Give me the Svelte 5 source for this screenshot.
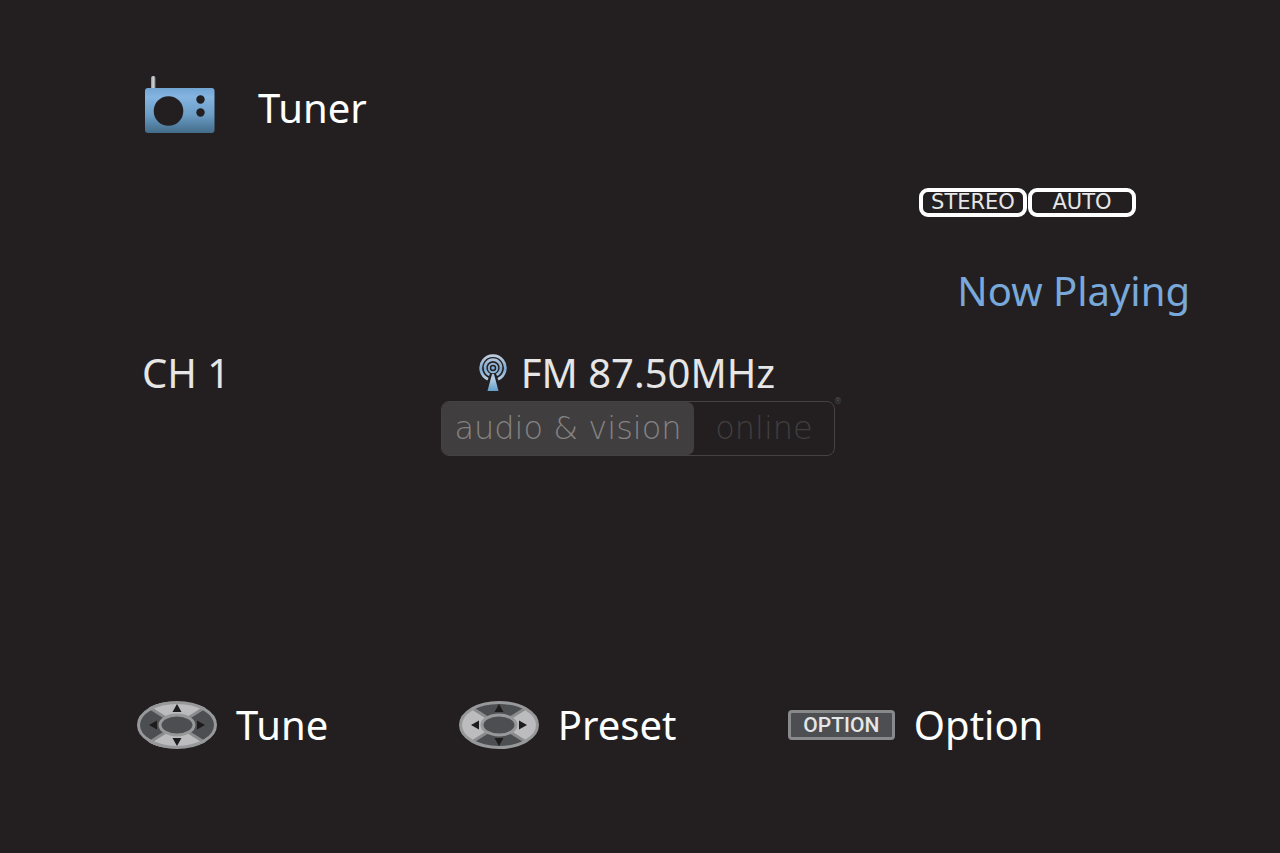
<script>
  let source = "Tuner";
  let status = "Now Playing";
  let modes = ["STEREO", "AUTO"];
  let station = { channel: "CH 1", frequency: "FM 87.50MHz" };

  // axis = the pair of arrows that is lit on the cursor pad
  let hints = [
    { label: "Tune", axis: "vertical" },
    { label: "Preset", axis: "horizontal" },
    { label: "Option", key: "OPTION" },
  ];
</script>

<main class="screen">
  <header class="title">
    <svg class="radio" viewBox="0 0 72 60" aria-hidden="true">
      <defs>
        <linearGradient id="radio-body" x1="0" y1="0" x2="0" y2="1">
          <stop offset="0" stop-color="#73a5d4" />
          <stop offset="0.2" stop-color="#84b4e0" />
          <stop offset="0.6" stop-color="#6b9dc6" />
          <stop offset="1" stop-color="#426b88" />
        </linearGradient>
        <linearGradient id="radio-antenna" x1="0" y1="0" x2="1" y2="0">
          <stop offset="0" stop-color="#8d9298" />
          <stop offset="0.5" stop-color="#d5d8dc" />
          <stop offset="1" stop-color="#767b81" />
        </linearGradient>
      </defs>
      <rect x="7" y="2" width="4.500" height="16" rx="2" fill="url(#radio-antenna)" />
      <rect x="1" y="14" width="69.500" height="45" rx="3" fill="url(#radio-body)" />
      <circle cx="24.500" cy="37" r="14.800" fill="#231f20" />
      <circle cx="56.500" cy="25.500" r="4.200" fill="#231f20" />
      <circle cx="56.500" cy="38.500" r="4.200" fill="#231f20" />
    </svg>
    <h1>{source}</h1>
  </header>

  <ul class="modes">
    {#each modes as mode}
      <li>{mode}</li>
    {/each}
  </ul>

  <p class="status">{status}</p>

  <section class="station">
    <span class="channel">{station.channel}</span>
    <span class="frequency">
      <svg class="antenna" viewBox="0 0 28 38" aria-hidden="true">
        <defs>
          <linearGradient id="antenna-fill" x1="0" y1="0" x2="0" y2="38" gradientUnits="userSpaceOnUse">
            <stop offset="0" stop-color="#c4d0df" />
            <stop offset="0.4" stop-color="#7fa9d0" />
            <stop offset="0.65" stop-color="#b5cde4" />
            <stop offset="1" stop-color="#5b9bc8" />
          </linearGradient>
        </defs>
        <g fill="none" stroke="url(#antenna-fill)">
          <path d="M9 25.200A12.300 12.300 0 1 1 19 25.200" stroke-width="2.800" />
          <path d="M10.500 20.800A8 8 0 1 1 17.500 20.800" stroke-width="2.600" />
          <circle cx="14" cy="14" r="4.200" stroke-width="2" />
        </g>
        <circle cx="14" cy="14" r="1.800" fill="url(#antenna-fill)" />
        <path d="M13 20h2l4.500 17h-11z" fill="url(#antenna-fill)" />
      </svg>
      {station.frequency}
    </span>
  </section>

  <footer class="hints">
    {#each hints as hint}
      <button type="button">
        {#if hint.key}
          <span class="key">{hint.key}</span>
        {:else}
          <svg class="pad {hint.axis}" viewBox="0 0 80 48" aria-hidden="true">
            <ellipse class="side" cx="40" cy="24" rx="39" ry="23" />
            <path class="tops" d="M40 24L12 6.500Q24 0 40 1T68 6.500zM40 24L12 41.500Q24 48 40 47T68 41.500z" />
            <path class="split" d="M13 7L67 41M67 7L13 41" />
            <ellipse class="rim" cx="40" cy="24" rx="38.500" ry="22.500" />
            <ellipse class="hub" cx="40" cy="24" rx="17" ry="10" />
            <path class="arrow" d="M40 3l4.500 8h-9zM40 45l4.500-8h-9zM12 24l8-4.500v9zM68 24l-8-4.500v9z" />
          </svg>
        {/if}
        <span class="label">{hint.label}</span>
      </button>
    {/each}
  </footer>

  <div class="watermark">
    <span class="name">audio &amp; vision</span>
    <span class="suffix">online</span>
    <span class="mark">®</span>
  </div>
</main>

<style>
  :global(body) {
    margin: 0;
    background: #231f20;
  }

  .screen {
    position: relative;
    display: flex;
    flex-direction: column;
    box-sizing: border-box;
    min-height: 100vh;
    padding: 72px 90px 98px 137px;
    background: #231f20;
    color: #e6e6e6;
    font-family: "Noto Sans", "Open Sans", sans-serif;
    font-size: 40px;
    line-height: 60px;
  }

  .title {
    display: flex;
    align-items: flex-start;
    gap: 42px;
    padding: 2px 0 0 7px;
    height: 64px;
    color: #fff;
  }

  .radio {
    width: 72px;
    height: 60px;
  }

  h1 {
    margin: 4px 0 0;
    font-size: 40px;
    font-weight: 400;
  }

  .modes {
    display: flex;
    align-self: flex-end;
    gap: 1px;
    margin: 50px 54px 0 0;
    padding: 0;
    list-style: none;
  }

  .modes li {
    box-sizing: border-box;
    width: 108px;
    height: 29px;
    border: 4px solid #fff;
    border-radius: 9px;
    font-family: "DejaVu Sans", sans-serif;
    font-size: 21px;
    line-height: 20px;
    text-align: center;
  }

  .status {
    margin: 44px 0 0;
    color: #78a9da;
    text-align: right;
  }

  .station,
  .hints {
    display: grid;
    grid-template-columns: 44fr 45fr 55fr;
    align-items: center;
  }

  .station {
    margin-top: 22px;
  }

  .channel {
    padding-left: 5px;
  }

  .frequency {
    display: flex;
    align-items: center;
    gap: 14px;
    padding-left: 20px;
    white-space: nowrap;
  }

  .antenna {
    width: 28px;
    height: 38px;
  }

  .hints {
    margin-top: auto;
  }

  button {
    display: flex;
    align-items: center;
    gap: 19px;
    padding: 0;
    border: 0;
    background: none;
    color: #fff;
    font: inherit;
    cursor: pointer;
  }

  .pad {
    width: 80px;
    height: 48px;
  }

  .side,
  .hub {
    fill: #4c4e51;
  }

  .tops {
    fill: #bcbcbe;
  }

  .horizontal .side {
    fill: #bcbcbe;
  }

  .horizontal .tops {
    fill: #4c4e51;
  }

  .split {
    stroke: #8a8b8d;
    stroke-width: 3;
  }

  .rim {
    fill: none;
    stroke: #97989a;
    stroke-width: 3;
  }

  .hub {
    stroke: #97989a;
    stroke-width: 3;
  }

  .arrow {
    fill: #1d1b1c;
  }

  .key {
    box-sizing: border-box;
    width: 107px;
    height: 30px;
    border: 3px solid #88898b;
    border-radius: 4px;
    background: #4c4e51;
    color: #e6e6e6;
    font-family: Roboto, sans-serif;
    font-size: 21px;
    font-weight: 500;
    line-height: 25px;
  }

  .watermark {
    position: absolute;
    top: 401px;
    left: 50%;
    display: flex;
    box-sizing: border-box;
    width: 394px;
    height: 55px;
    margin-left: -199px;
    border: 1px solid #454243;
    border-radius: 8px;
    color: #413e3f;
    font-family: "DejaVu Sans", sans-serif;
    font-size: 32px;
    font-weight: 200;
    line-height: 52px;
    text-align: center;
    white-space: nowrap;
    pointer-events: none;
  }

  .name {
    width: 252px;
    border-radius: 7px;
    background: #403e3f;
    color: #858384;
  }

  .suffix {
    flex: 1;
  }

  .mark {
    position: absolute;
    top: -4px;
    right: -8px;
    color: #555253;
    font-size: 8px;
    font-weight: 400;
    line-height: 8px;
  }
</style>
